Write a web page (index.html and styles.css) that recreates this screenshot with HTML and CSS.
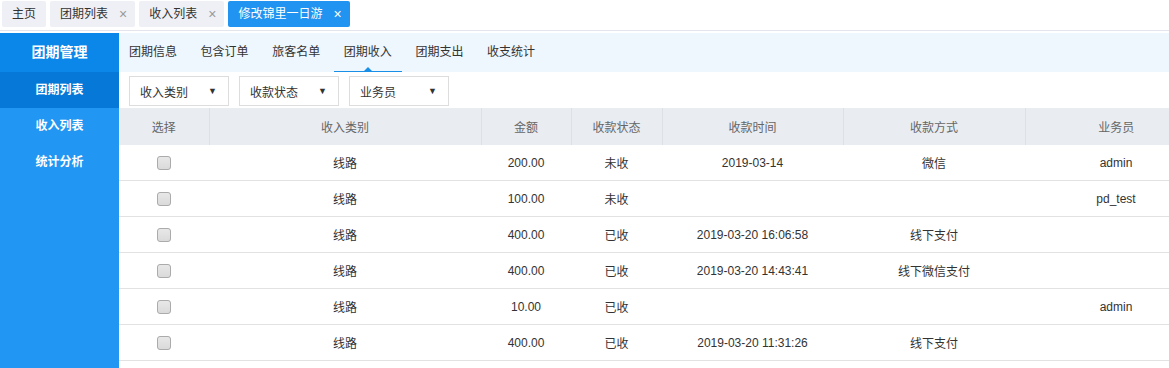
FILE: index.html
```html
<!DOCTYPE html>
<html lang="zh-CN">

<head>
    <meta charset="UTF-8">
    <meta name="viewport" content="width=device-width, initial-scale=1.0">
    <link rel="stylesheet" href="styles.css">
</head>

<body>
    <div class="tabs">
        <div class="tab">主页</div>
        <div class="tab">团期列表<span class="close">×</span></div>
        <div class="tab">收入列表<span class="close">×</span></div>
        <div class="tab active">修改锦里一日游<span class="close">×</span></div>
    </div>

    <div class="main">
        <div class="sidebar">
            <div class="side-title">团期管理</div>
            <div class="side-item current">团期列表</div>
            <div class="side-item">收入列表</div>
            <div class="side-item">统计分析</div>
        </div>

        <div class="content">
            <div class="subnav">
                <div class="subnav-item">团期信息</div>
                <div class="subnav-item">包含订单</div>
                <div class="subnav-item">旅客名单</div>
                <div class="subnav-item selected">团期收入</div>
                <div class="subnav-item">团期支出</div>
                <div class="subnav-item">收支统计</div>
            </div>

            <div class="filters">
                <div class="select">收入类别<span class="arrow">▼</span></div>
                <div class="select">收款状态<span class="arrow">▼</span></div>
                <div class="select">业务员<span class="arrow">▼</span></div>
            </div>

            <table class="grid">
                <colgroup>
                    <col style="width: 90px">
                    <col style="width: 272px">
                    <col style="width: 90px">
                    <col style="width: 91px">
                    <col style="width: 181px">
                    <col style="width: 182px">
                    <col style="width: 182px">
                </colgroup>
                <thead>
                    <tr>
                        <th>选择</th>
                        <th>收入类别</th>
                        <th>金额</th>
                        <th>收款状态</th>
                        <th>收款时间</th>
                        <th>收款方式</th>
                        <th>业务员</th>
                    </tr>
                </thead>
                <tbody>
                    <tr>
                        <td><span class="chk"></span></td>
                        <td>线路</td>
                        <td>200.00</td>
                        <td>未收</td>
                        <td>2019-03-14</td>
                        <td>微信</td>
                        <td>admin</td>
                    </tr>
                    <tr>
                        <td><span class="chk"></span></td>
                        <td>线路</td>
                        <td>100.00</td>
                        <td>未收</td>
                        <td></td>
                        <td></td>
                        <td>pd_test</td>
                    </tr>
                    <tr>
                        <td><span class="chk"></span></td>
                        <td>线路</td>
                        <td>400.00</td>
                        <td>已收</td>
                        <td>2019-03-20 16:06:58</td>
                        <td>线下支付</td>
                        <td></td>
                    </tr>
                    <tr>
                        <td><span class="chk"></span></td>
                        <td>线路</td>
                        <td>400.00</td>
                        <td>已收</td>
                        <td>2019-03-20 14:43:41</td>
                        <td>线下微信支付</td>
                        <td></td>
                    </tr>
                    <tr>
                        <td><span class="chk"></span></td>
                        <td>线路</td>
                        <td>10.00</td>
                        <td>已收</td>
                        <td></td>
                        <td></td>
                        <td>admin</td>
                    </tr>
                    <tr>
                        <td><span class="chk"></span></td>
                        <td>线路</td>
                        <td>400.00</td>
                        <td>已收</td>
                        <td>2019-03-20 11:31:26</td>
                        <td>线下支付</td>
                        <td></td>
                    </tr>
                </tbody>
            </table>
        </div>
    </div>
</body>

</html>
```

FILE: styles.css
```css
html,
body {
    margin: 0;
    height: 100%;
    overflow: hidden;
    background: #ffffff;
    font-family: "Liberation Sans", "Noto Sans CJK SC", sans-serif;
    font-size: 12px;
    color: #333333;
}

/* top tab bar */
.tabs {
    display: flex;
    gap: 4px;
    height: 31px;
    padding: 1px 2px 0;
    box-sizing: border-box;
    border-bottom: 1px solid #e2e6ec;
    margin-bottom: 2px;
}

.tab {
    height: 26px;
    line-height: 26px;
    padding: 0 8px 0 10px;
    background: #eef0f5;
    border-radius: 2px;
    color: #333333;
    display: flex;
    align-items: center;
}

.tab:first-child {
    padding-right: 10px;
}

.tab .close {
    margin-left: 11px;
    color: #999999;
    font-size: 14px;
}

.tab.active {
    background: #2193f0;
    color: #ffffff;
}

.tab.active .close {
    color: #ffffff;
}

/* layout */
.main {
    display: flex;
    height: calc(100% - 33px);
}

.sidebar {
    width: 119px;
    flex-shrink: 0;
    background: #2196f2;
    color: #ffffff;
    font-weight: bold;
}

.side-title {
    height: 39px;
    line-height: 39px;
    text-align: center;
    font-size: 14px;
    background: #0a87e8;
}

.side-item {
    height: 36px;
    line-height: 36px;
    text-align: center;
}

.side-item.current {
    background: #0679d8;
}

.content {
    flex: 1;
    overflow: hidden;
}

/* sub navigation */
.subnav {
    display: flex;
    gap: 3.6px;
    height: 39px;
    background: #eef6fe;
}

.subnav-item {
    position: relative;
    padding: 0 10px;
    line-height: 39px;
}

.subnav-item.selected::after {
    content: "";
    position: absolute;
    left: 0;
    right: 0;
    bottom: 0;
    height: 1px;
    background: #1a8fe8;
}

.subnav-item.selected::before {
    content: "";
    position: absolute;
    left: 50%;
    bottom: 1px;
    margin-left: -4px;
    border-left: 4px solid transparent;
    border-right: 4px solid transparent;
    border-bottom: 4px solid #1a8fe8;
}

/* filters */
.filters {
    display: flex;
    gap: 10px;
    height: 36px;
    padding: 4px 10px 0;
    box-sizing: border-box;
}

.select {
    width: 100px;
    height: 30px;
    box-sizing: border-box;
    border: 1px solid #dddddd;
    padding: 0 11px 0 10px;
    display: flex;
    align-items: center;
    justify-content: space-between;
}

.select .arrow {
    font-size: 9px;
    color: #333333;
}

/* table */
.grid {
    width: 1088px;
    table-layout: fixed;
    border-collapse: collapse;
}

.grid th {
    height: 37px;
    padding: 0;
    background: #e9ecf1;
    color: #666666;
    font-weight: normal;
    border-left: 1px solid #dde1e6;
}

.grid th:first-child {
    border-left: none;
}

.grid td {
    height: 35px;
    padding: 0;
    text-align: center;
    border-bottom: 1px solid #e2e2e2;
}

.chk {
    display: inline-block;
    width: 14px;
    height: 14px;
    box-sizing: border-box;
    border: 1px solid #ababab;
    border-radius: 3px;
    background: linear-gradient(#e8e8e8, #dadada);
    vertical-align: middle;
}
```
